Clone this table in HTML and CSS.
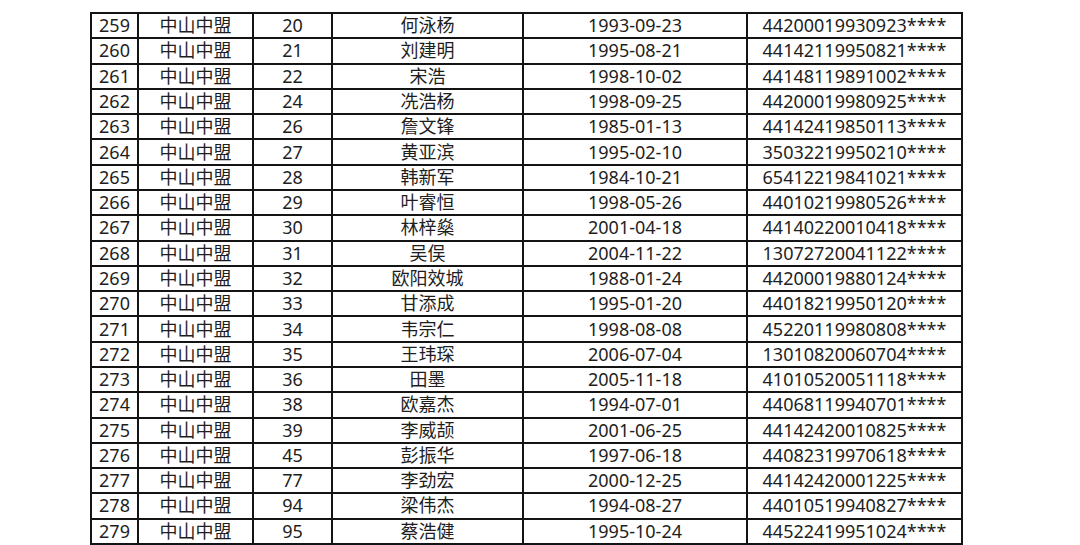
FILE: index.html
```html
<!DOCTYPE html>
<html lang="zh-CN">
<head>
<meta charset="utf-8">
<title>名单</title>
<link rel="stylesheet" href="styles.css">
</head>
<body>
<table class="roster">
<colgroup>
<col class="c-no"><col class="c-club"><col class="c-num"><col class="c-name"><col class="c-date"><col class="c-id">
</colgroup>
<tbody>
<tr><td>259</td><td>中山中盟</td><td>20</td><td>何泳杨</td><td>1993-09-23</td><td>44200019930923****</td></tr>
<tr><td>260</td><td>中山中盟</td><td>21</td><td>刘建明</td><td>1995-08-21</td><td>44142119950821****</td></tr>
<tr><td>261</td><td>中山中盟</td><td>22</td><td>宋浩</td><td>1998-10-02</td><td>44148119891002****</td></tr>
<tr><td>262</td><td>中山中盟</td><td>24</td><td>冼浩杨</td><td>1998-09-25</td><td>44200019980925****</td></tr>
<tr><td>263</td><td>中山中盟</td><td>26</td><td>詹文锋</td><td>1985-01-13</td><td>44142419850113****</td></tr>
<tr><td>264</td><td>中山中盟</td><td>27</td><td>黄亚滨</td><td>1995-02-10</td><td>35032219950210****</td></tr>
<tr><td>265</td><td>中山中盟</td><td>28</td><td>韩新军</td><td>1984-10-21</td><td>65412219841021****</td></tr>
<tr><td>266</td><td>中山中盟</td><td>29</td><td>叶睿恒</td><td>1998-05-26</td><td>44010219980526****</td></tr>
<tr><td>267</td><td>中山中盟</td><td>30</td><td>林梓燊</td><td>2001-04-18</td><td>44140220010418****</td></tr>
<tr><td>268</td><td>中山中盟</td><td>31</td><td>吴俣</td><td>2004-11-22</td><td>13072720041122****</td></tr>
<tr><td>269</td><td>中山中盟</td><td>32</td><td>欧阳效城</td><td>1988-01-24</td><td>44200019880124****</td></tr>
<tr><td>270</td><td>中山中盟</td><td>33</td><td>甘添成</td><td>1995-01-20</td><td>44018219950120****</td></tr>
<tr><td>271</td><td>中山中盟</td><td>34</td><td>韦宗仁</td><td>1998-08-08</td><td>45220119980808****</td></tr>
<tr><td>272</td><td>中山中盟</td><td>35</td><td>王玮琛</td><td>2006-07-04</td><td>13010820060704****</td></tr>
<tr><td>273</td><td>中山中盟</td><td>36</td><td>田墨</td><td>2005-11-18</td><td>41010520051118****</td></tr>
<tr><td>274</td><td>中山中盟</td><td>38</td><td>欧嘉杰</td><td>1994-07-01</td><td>44068119940701****</td></tr>
<tr><td>275</td><td>中山中盟</td><td>39</td><td>李威颉</td><td>2001-06-25</td><td>44142420010825****</td></tr>
<tr><td>276</td><td>中山中盟</td><td>45</td><td>彭振华</td><td>1997-06-18</td><td>44082319970618****</td></tr>
<tr><td>277</td><td>中山中盟</td><td>77</td><td>李劲宏</td><td>2000-12-25</td><td>44142420001225****</td></tr>
<tr><td>278</td><td>中山中盟</td><td>94</td><td>梁伟杰</td><td>1994-08-27</td><td>44010519940827****</td></tr>
<tr><td>279</td><td>中山中盟</td><td>95</td><td>蔡浩健</td><td>1995-10-24</td><td>44522419951024****</td></tr>
</tbody>
</table>
</body>
</html>
```
FILE: styles.css
```css
html, body {
  margin: 0;
  padding: 0;
  background: #ffffff;
}
body {
  padding: 12px 0 0 90px;
  font-family: "Noto Sans", "Noto Sans CJK SC", sans-serif;
  color: #1e1e1e;
}
.roster {
  table-layout: fixed;
  border-collapse: separate;
  border-spacing: 2px;
  background: #141414;
  width: 873px;
}
.c-no { width: 45px; }
.c-club { width: 113px; }
.c-num { width: 77px; }
.c-name { width: 189px; }
.c-date { width: 222px; }
.c-id { width: 213px; }
.roster td {
  background: #ffffff;
  padding: 0;
  height: 23.29px;
  line-height: 23px;
  font-size: 18px;
  text-align: center;
  white-space: nowrap;
}
```
